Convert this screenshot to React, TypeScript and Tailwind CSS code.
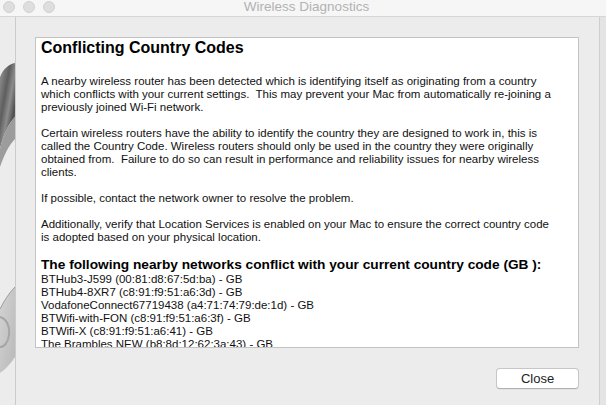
import React from "react";

const paragraphs: string[][] = [
  [
    "A nearby wireless router has been detected which is identifying itself as originating from a country",
    "which conflicts with your current settings.  This may prevent your Mac from automatically re-joining a",
    "previously joined Wi-Fi network.",
  ],
  [
    "Certain wireless routers have the ability to identify the country they are designed to work in, this is",
    "called the Country Code. Wireless routers should only be used in the country they were originally",
    "obtained from.  Failure to do so can result in performance and reliability issues for nearby wireless",
    "clients.",
  ],
  ["If possible, contact the network owner to resolve the problem."],
  [
    "Additionally, verify that Location Services is enabled on your Mac to ensure the correct country code",
    "is adopted based on your physical location.",
  ],
];

const networks = [
  "BTHub3-J599 (00:81:d8:67:5d:ba) - GB",
  "BTHub4-8XR7 (c8:91:f9:51:a6:3d) - GB",
  "VodafoneConnect67719438 (a4:71:74:79:de:1d) - GB",
  "BTWifi-with-FON (c8:91:f9:51:a6:3f) - GB",
  "BTWifi-X (c8:91:f9:51:a6:41) - GB",
  "The Brambles NEW (b8:8d:12:62:3a:43) - GB",
];

function AppIconSliver() {
  // the part of the Wireless Diagnostics icon peeking out behind the sheet
  return (
    <svg width="15" height="388" viewBox="0 0 15 388" className="block">
      <defs>
        <linearGradient id="band" x1="0" y1="0" x2="1" y2="1">
          <stop offset="0" stopColor="#9a9a9a" />
          <stop offset="0.35" stopColor="#5e5e5e" />
          <stop offset="0.55" stopColor="#8c8c8c" />
          <stop offset="0.75" stopColor="#4f4f4f" />
          <stop offset="1" stopColor="#a8a8a8" />
        </linearGradient>
        <linearGradient id="low" x1="0" y1="0" x2="1" y2="1">
          <stop offset="0" stopColor="#d4d4d4" />
          <stop offset="1" stopColor="#b8b8b8" />
        </linearGradient>
      </defs>
      <path d="M15 46 C9 47 3 52 0 60 L0 132 C3 118 9 106 15 100 Z" fill="url(#band)" />
      <path d="M15 100 C9 106 3 118 0 132 L0 150 C4 138 9 128 15 122 Z" fill="#9c9c9c" />
      <path d="M15 270 C9 276 4 284 0 292 L0 356 C6 352 11 346 15 340 Z" fill="url(#low)" />
      <path d="M0 300 C7 302 10 310 9 318 C8 326 4 330 0 330" fill="none" stroke="#a6a6a6" strokeWidth="2" />
      <path d="M15 270 C9 276 4 284 0 292" fill="none" stroke="#9e9e9e" strokeWidth="1" />
    </svg>
  );
}

export default function App() {
  return (
    <div className="w-[606px] h-[405px] overflow-hidden bg-[#ececec] text-black font-['Liberation_Sans',Arial,sans-serif]">
      {/* Title bar */}
      <div className="relative h-[17px] bg-[#f6f6f6] border-b border-[#d6d6d6] flex items-center">
        <div className="flex items-center gap-[8px] pl-[3px] -mt-[2px]">
          <span className="w-[12px] h-[12px] rounded-full bg-[#dedede] border border-[#d2d2d2]" />
          <span className="w-[12px] h-[12px] rounded-full bg-[#dedede] border border-[#d2d2d2]" />
          <span className="w-[12px] h-[12px] rounded-full bg-[#dedede] border border-[#d2d2d2]" />
        </div>
        <div className="flex-1 text-center text-[13.5px] leading-[13px] text-[#b2b2b2] -mt-[3px] pr-[48px]">
          Wireless Diagnostics
        </div>
      </div>

      <div className="flex h-[388px]">
        <div className="w-[15px] bg-[#ececec]">
          <AppIconSliver />
        </div>

        {/* Sheet */}
        <div className="w-[584px] border-l border-[#cbcbcb] bg-[#ececec] pt-[20px] pl-[19px] pr-[20px] flex flex-col">
          <div className="h-[311px] bg-white border border-[#c3c3c3] overflow-hidden pl-[5px] pr-[2px]">
            <div className="text-[16px] leading-[20px] font-bold mb-[17px]">Conflicting Country Codes</div>
            <div className="text-[11.5px] leading-[13px] text-[#111]">
              {paragraphs.map((p, i) => (
                <div key={i} className={i > 0 ? "mt-[13px]" : ""}>
                  {p.map((line, j) => (
                    <div key={j} className="whitespace-pre">
                      {line}
                    </div>
                  ))}
                </div>
              ))}
            </div>
            <div className="mt-[13px] text-[13.7px] leading-[16px] font-bold whitespace-pre">
              The following nearby networks conflict with your current country code (GB ):
            </div>
            <div className="text-[11.5px] leading-[12.9px] text-[#111]">
              {networks.map((n) => (
                <div key={n} className="whitespace-pre">
                  {n}
                </div>
              ))}
            </div>
          </div>

          <div className="flex justify-end mt-[20px]">
            <button className="w-[83px] h-[21px] bg-white border border-[#c6c6c6] border-b-[#b0b0b0] rounded-[4px] text-[13px] leading-[13px] text-[#222] shadow-[0_0.5px_0.5px_rgba(0,0,0,0.08)]">
              Close
            </button>
          </div>
        </div>

        <div className="flex-1 border-l border-[#cfcfcf] bg-[#e4e4e4]" />
      </div>
    </div>
  );
}
